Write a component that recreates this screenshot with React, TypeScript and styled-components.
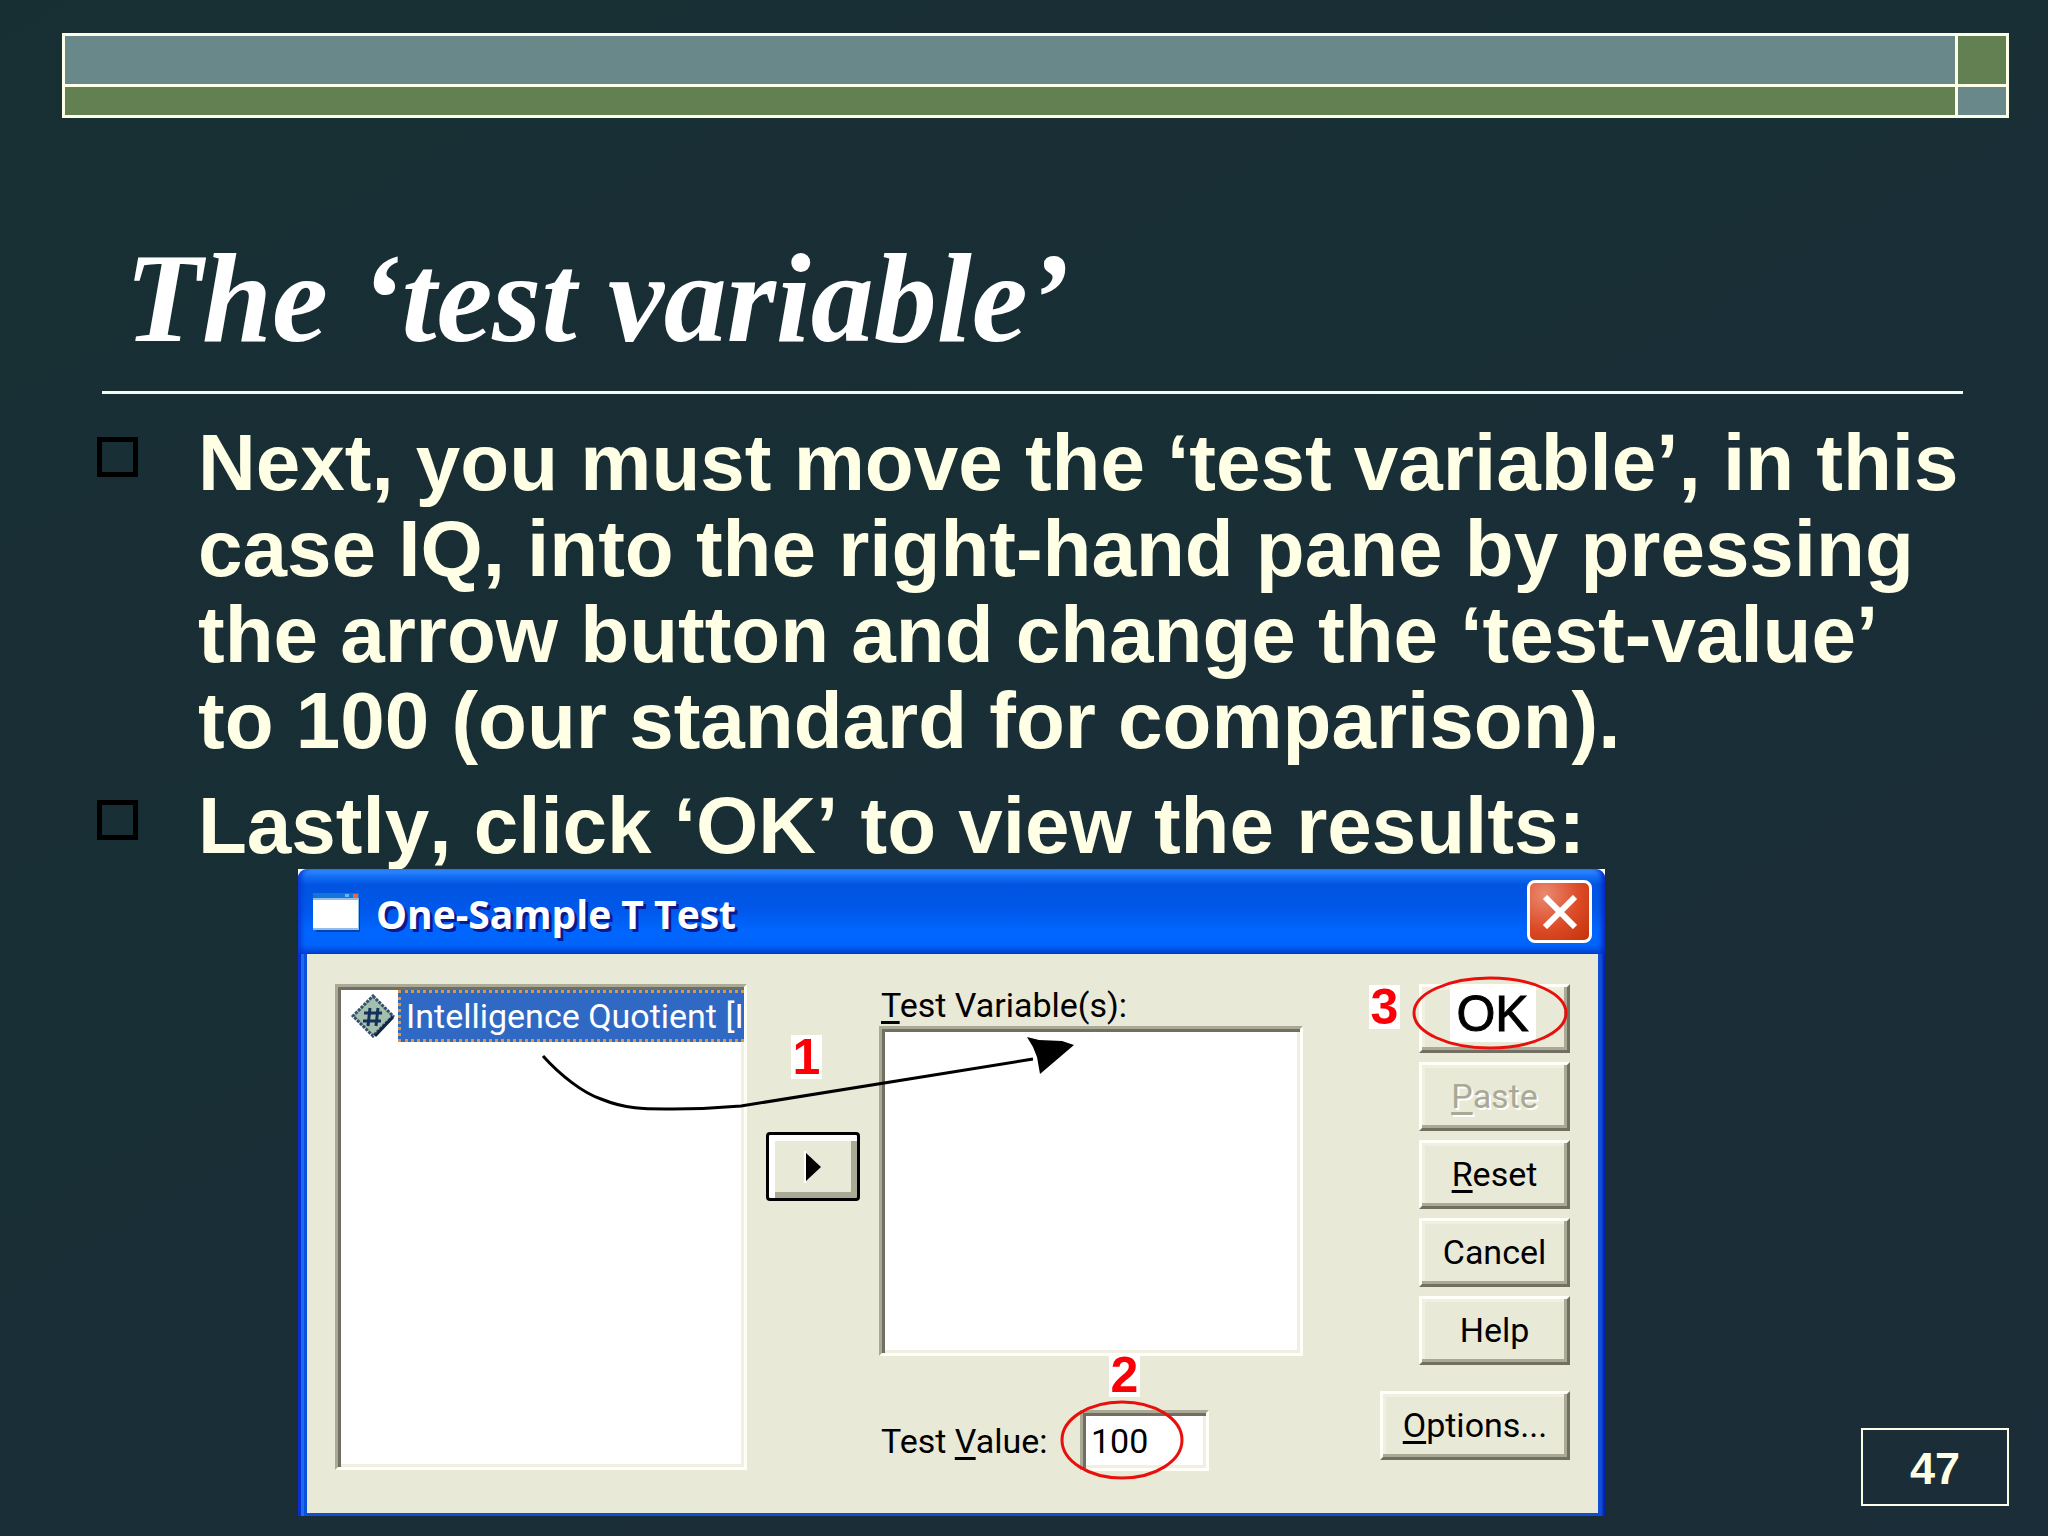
import React from "react";
import styled, { createGlobalStyle, css } from "styled-components";

const sans = `"Liberation Sans", Arial, sans-serif`;
const cream = "#ffffe6";
const face = "#e9e9d8";

const GlobalStyle = createGlobalStyle`
  *, *::before { box-sizing: border-box; }
  body { margin: 0; background: #192e36; }
`;

const Slide = styled.main`
  min-height: 100vh;
  display: flex;
  flex-direction: column;
  padding: 33px 39px 20px 62px;
  background: linear-gradient(150deg, #172f33 0%, #192e36 50%, #1b2d38 100%);
  color: ${cream};
  font-family: ${sans};
`;

const Banner = styled.div`
  display: grid;
  grid-template-columns: 1fr 48px;
  grid-template-rows: 48px 28px;
  gap: 3px;
  padding: 3px;
  background: #fdffe8;
`;

const Swatch = styled.div<{ $tone: "teal" | "green" }>`
  background: ${(p) => (p.$tone === "teal" ? "#68888a" : "#638053")};
`;

const Title = styled.h1`
  margin: 111px 46px 0 40px;
  padding: 0 0 22px 23px;
  border-bottom: 3px solid #f4fbf0;
  color: #fff;
  font: italic bold 126px/140px "Liberation Serif", "Times New Roman", serif;
`;

const Points = styled.ul`
  list-style: none;
  margin: 26px 44px 0 35px;
  padding: 0;
  display: flex;
  flex-direction: column;
  gap: 19px;
`;

const Point = styled.li`
  display: grid;
  grid-template-columns: 41px 1fr;
  column-gap: 60px;
  font-weight: bold;
  font-size: 80px;
  line-height: 86px;
  font-kerning: none;
  &::before {
    content: "";
    height: 40px;
    margin-top: 17px;
    border: 5px solid #000;
  }
`;

const Lower = styled.div`
  display: flex;
  justify-content: space-between;
  align-items: flex-end;
  padding-left: 236px;
`;

const PageNumber = styled.div`
  width: 148px;
  height: 78px;
  margin-bottom: 10px;
  padding-top: 4px;
  border: 2px solid #fdffe8;
  display: flex;
  align-items: center;
  justify-content: center;
  font-weight: bold;
  font-size: 45px;
`;

const Dialog = styled.section`
  position: relative;
  width: 1307px;
  color: #000;
  font-family: Roboto, ${sans};
  font-size: 34px;
`;

const Corners = styled.div`
  background: #fff;
`;

const TitleBar = styled.header`
  display: flex;
  align-items: center;
  gap: 16px;
  height: 85px;
  padding: 0 13px 0 15px;
  border-radius: 9px 9px 0 0;
  background: linear-gradient(#3d95ff 0, #1470f5 7px, #0054e0 16px, #0058ea 40px, #0066ff 62px, #0064fb 76px, #0042d0 85px);
  box-shadow: inset 5px 0 5px -2px #0a35d0, inset -5px 0 5px -2px #0a25c0;
`;

const Caption = styled.h2`
  flex: 1;
  margin: 0;
  padding-top: 4px;
  color: #fff;
  font: bold 39px/52px "Open Sans", "Noto Sans", sans-serif;
  text-shadow: 3px 3px 0 #0a1a8c;
`;

const CloseButton = styled.button`
  width: 65px;
  height: 63px;
  padding: 0;
  display: grid;
  place-items: center;
  border: 3px solid #fff;
  border-radius: 8px;
  background: radial-gradient(circle at 25% 20%, #ea8a70, #dc4a26 55%, #c23208);
`;

const Frame = styled.div`
  padding: 0 7px 3px 9px;
  background: linear-gradient(90deg, #0a2fd0 0 3px, #1a6cf0 3px 6px, #0b50d8 6px 9px, #0f4fd6 9px calc(100% - 4px), #0018a8 100%);
`;

const Body = styled.div`
  display: flex;
  align-items: flex-start;
  gap: 19px;
  padding: 30px 28px 42px;
  background: ${face};
`;

const sunken = css`
  border: 3px solid;
  border-color: #a9a995 #fffff8 #fffff8 #a9a995;
  box-shadow: inset 3px 3px 0 #706f62, inset -3px -3px 0 #f1efe2;
  background: #fff;
`;

const SourceList = styled.ul`
  ${sunken}
  list-style: none;
  margin: 0;
  width: 412px;
  height: 486px;
  padding: 3px;
`;

const SourceItem = styled.li`
  display: flex;
  align-items: center;
  gap: 3px;
  padding-left: 10px;
`;

const ItemIcon = styled.svg`
  flex: none;
  width: 44px;
  height: 44px;
`;

const ItemText = styled.span`
  flex: 1;
  white-space: nowrap;
  height: 52px;
  padding-left: 5px;
  border: 3px dotted #d79a3c;
  border-right-width: 0;
  background: #2f69c4;
  color: #fff;
  line-height: 46px;
`;

const raised = css`
  border: 3px solid;
  border-color: #fffff8 #716f62 #716f62 #fffff8;
  box-shadow: inset -3px -3px 0 #a9a995, inset 3px 3px 0 #f1efe2;
  background: ${face};
  color: #000;
`;

const MoveButton = styled.button`
  width: 94px;
  height: 69px;
  margin-top: 148px;
  padding: 0;
  display: grid;
  place-items: center;
  border: 3px solid #000;
  border-radius: 4px;
  background: ${face};
  box-shadow: inset 6px 6px 0 #fff, inset -6px -6px 0 #a9a995;
`;

const Target = styled.div`
  display: flex;
  flex-direction: column;
  width: 424px;
`;

const Label = styled.label`
  padding-left: 2px;
  line-height: 42px;
`;

const Mnemonic = styled.span`
  text-decoration: underline;
  text-decoration-thickness: 3px;
  text-underline-offset: 4px;
`;

const TargetList = styled.ul`
  ${sunken}
  margin: 0;
  height: 330px;
`;

const ValueRow = styled.div`
  display: flex;
  align-items: center;
  justify-content: space-between;
  width: 330px;
  margin-top: 54px;
`;

const ValueInput = styled.input`
  ${sunken}
  width: 129px;
  height: 61px;
  padding: 0 8px;
  border-radius: 0;
  color: #000;
  font: inherit;
`;

const Actions = styled.div`
  flex: 1;
  display: flex;
  flex-direction: column;
  align-items: flex-end;
  gap: 9px;
`;

const Action = styled.button<{ $wide?: boolean }>`
  ${raised}
  width: ${(p) => (p.$wide ? 190 : 151)}px;
  height: 69px;
  margin-top: ${(p) => (p.$wide ? 17 : 0)}px;
  padding: 0 0 2px;
  display: flex;
  align-items: center;
  justify-content: center;
  font: inherit;
  &:disabled {
    color: #a9a995;
    text-shadow: 2px 2px 0 #fff;
  }
`;

const OkText = styled.span`
  align-self: flex-start;
  width: 86px;
  margin-right: 4px;
  background: #fff;
  font: 50px/55px ${sans};
  -webkit-text-stroke: 1px #000;
`;

const Drawing = styled.svg`
  position: absolute;
  inset: 0;
  width: 100%;
  height: 100%;
  pointer-events: none;
`;

const Step = styled.span<{ $x: number; $y: number }>`
  position: absolute;
  left: ${(p) => p.$x}px;
  top: ${(p) => p.$y}px;
  width: 31px;
  background: #fff;
  color: #fb0007;
  font: bold 50px/44px ${sans};
  text-align: center;
`;

const WindowIcon = () => (
  <svg width="47" height="40" viewBox="0 0 47 40" aria-hidden="true">
    <path d="M3 40V37H45V6H47V40Z" fill="#0a3fae" />
    <rect y="1" width="46" height="37" fill="#8fc0e8" />
    <rect y="1" width="46" height="5" fill="#1673d8" />
    <rect x="32" y="2" width="4" height="3" fill="#6db4f5" />
    <rect x="40" y="2" width="5" height="4" fill="#e8683c" />
    <rect y="8" width="45" height="28" fill="#fff" />
  </svg>
);

const VariableIcon = () => (
  <ItemIcon viewBox="0 0 44 44" aria-hidden="true">
    <path d="M22 2L42 22L22 42L2 22Z" fill="#a5bfae" stroke="#33506a" strokeWidth="3" strokeDasharray="3 1" />
    <path d="M24 42L42 23" stroke="#10233f" strokeWidth="3" />
    <path d="M19 14L17 32M27 14L25 32M13 19H31M12 27H30" stroke="#12305a" strokeWidth="3" fill="none" />
  </ItemIcon>
);

export default function App() {
  return (
    <>
      <GlobalStyle />
      <Slide>
        <Banner>
          <Swatch $tone="teal" />
          <Swatch $tone="green" />
          <Swatch $tone="green" />
          <Swatch $tone="teal" />
        </Banner>
        <Title>The ‘test variable’</Title>
        <Points>
          <Point>
            Next, you must move the ‘test variable’, in this case IQ, into the right-hand pane by
            pressing the arrow button and change the ‘test-value’ to 100 (our standard for
            comparison).
          </Point>
          <Point>Lastly, click ‘OK’ to view the results:</Point>
        </Points>
        <Lower>
          <Dialog aria-label="One-Sample T Test">
            <Corners>
              <TitleBar>
                <WindowIcon />
                <Caption>One-Sample T Test</Caption>
                <CloseButton aria-label="Close">
                  <svg width="36" height="34" viewBox="0 0 36 34" aria-hidden="true">
                    <path d="M3 2L33 32M33 2L3 32" stroke="#fff" strokeWidth="6" />
                  </svg>
                </CloseButton>
              </TitleBar>
            </Corners>
            <Frame>
              <Body>
                <SourceList role="listbox" aria-label="Variables">
                  <SourceItem role="option" aria-selected="true">
                    <VariableIcon />
                    <ItemText>Intelligence Quotient [I</ItemText>
                  </SourceItem>
                </SourceList>
                <MoveButton aria-label="Move variable">
                  <svg width="18" height="34" viewBox="0 0 18 34" aria-hidden="true">
                    <path d="M1 1V33" stroke="#fff" strokeWidth="2" />
                    <path d="M2 3L17 17L2 31Z" fill="#000" />
                  </svg>
                </MoveButton>
                <Target>
                  <Label as="span" id="targets">
                    <Mnemonic>T</Mnemonic>est Variable(s):
                  </Label>
                  <TargetList role="listbox" aria-labelledby="targets" />
                  <ValueRow>
                    <Label htmlFor="value">
                      Test <Mnemonic>V</Mnemonic>alue:
                    </Label>
                    <ValueInput id="value" defaultValue="100" />
                  </ValueRow>
                </Target>
                <Actions>
                  <Action>
                    <OkText>OK</OkText>
                  </Action>
                  <Action disabled>
                    <Mnemonic>P</Mnemonic>aste
                  </Action>
                  <Action>
                    <Mnemonic>R</Mnemonic>eset
                  </Action>
                  <Action>Cancel</Action>
                  <Action>Help</Action>
                  <Action $wide>
                    <Mnemonic>O</Mnemonic>ptions...
                  </Action>
                </Actions>
              </Body>
            </Frame>
            <Drawing viewBox="0 0 1307 647" aria-hidden="true">
              <path
                d="M245 187C262 206 285 224 303 230C330 241 350 240 375 240C400 240 420 239 443 237L735 190"
                fill="none"
                stroke="#000"
                strokeWidth="3"
              />
              <path d="M729 168L741 171L764 172L776 176L742 205L739 188L735 178Z" fill="#000" />
              <ellipse cx="1192" cy="144" rx="76" ry="35" fill="none" stroke="#e8100c" strokeWidth="3" />
              <ellipse cx="824" cy="571" rx="60" ry="38" fill="none" stroke="#e8100c" strokeWidth="3" />
            </Drawing>
            <Step $x={493} $y={166}>1</Step>
            <Step $x={811} $y={484}>2</Step>
            <Step $x={1071} $y={116}>3</Step>
          </Dialog>
          <PageNumber>47</PageNumber>
        </Lower>
      </Slide>
    </>
  );
}
